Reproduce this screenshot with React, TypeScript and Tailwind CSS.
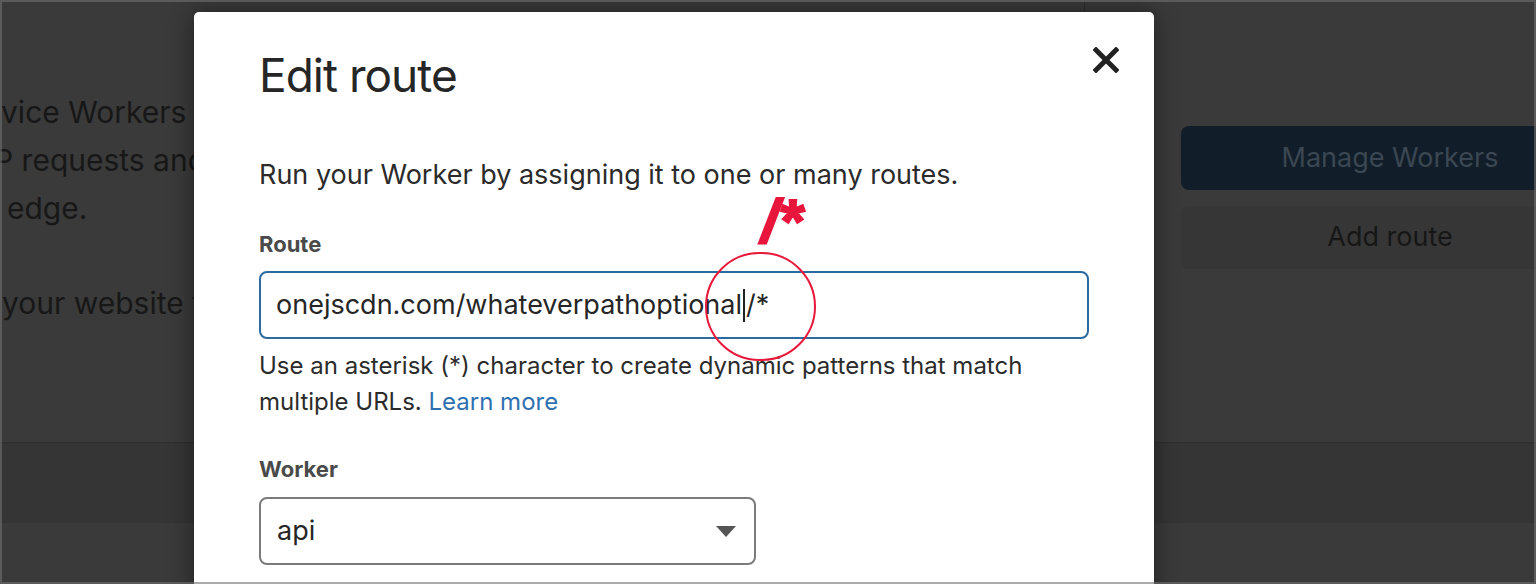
import React from "react";

const bgLines = [
  { text: "vice Workers intercept", ml: "ml-[1px]" },
  { text: "P requests and run", ml: "-ml-[6px]" },
  { text: "edge.", ml: "ml-[7px]" },
];

function CloseIcon() {
  return (
    <svg width="26" height="26" viewBox="0 0 26 26">
      <path d="M3 3 L23 23 M23 3 L3 23" stroke="#222" strokeWidth="5" strokeLinecap="square" />
    </svg>
  );
}

export default function App() {
  return (
    <div
      className="relative w-[1536px] h-[584px] overflow-hidden bg-[#3a3a3a]"
      style={{ fontFamily: "Inter, 'Noto Sans', sans-serif" }}
    >
      {/* page behind the dialog */}
      <div className="flex h-[442px]">
        <div className="w-[1085px] shrink-0 border-r border-[#2f2f2f] pt-[88px] text-[30px] leading-[48px] text-[#171717] whitespace-nowrap overflow-hidden">
          {bgLines.map(l => (
            <div key={l.text} className={l.ml}>{l.text}</div>
          ))}
          <div className="mt-[47px] ml-[2px]">your website to run</div>
        </div>
        <div className="flex-1 pl-[96px] pt-[126px] flex flex-col gap-[16px]">
          <div className="w-[418px] shrink-0 h-[64px] rounded-[8px] bg-[#111e29] flex items-center justify-center text-[27px] text-[#3b4752]">
            Manage Workers
          </div>
          <div className="w-[418px] shrink-0 h-[63px] rounded-[8px] bg-[#363636] flex items-center justify-center text-[27px] text-[#161616]">
            Add route
          </div>
        </div>
      </div>
      <div className="h-[81px] border-t border-[#2f2f2f] bg-[#353535]" />

      {/* dialog */}
      <div className="absolute left-[194px] top-[12px] w-[960px] h-[620px] bg-white rounded-[5px] shadow-[0_0_24px_rgba(0,0,0,0.45)] pl-[65px] pr-[65px] text-[#262626]">
        <div className="flex items-start justify-between pt-[36px]">
          <h1 className="text-[46px] leading-[54px] tracking-[-1px] text-[#262626]">Edit route</h1>
          <div className="mt-[-1px] mr-[-30px]">
            <CloseIcon />
          </div>
        </div>
        <p className="mt-[56px] text-[27px] leading-[34px] text-[#2b2b2b]">
          Run your Worker by assigning it to one or many routes.
        </p>
        <div className="mt-[38px] text-[22px] font-bold leading-[28px] text-[#4a4a4a]">Route</div>
        <div className="mt-[13px] w-[830px] h-[68px] rounded-[8px] border-2 border-[#2c6aa0] flex items-center pl-[15px] text-[27px] text-[#262626]">
          <span>onejscdn.com/whateverpathoptional</span>
          <span className="inline-block w-[2px] h-[33px] bg-[#222] mx-[1px]" />
          <span>/*</span>
        </div>
        <p className="mt-[9px] text-[24px] leading-[36px] text-[#2b2b2b]">
          Use an asterisk (*) character to create dynamic patterns that match
          <br />
          multiple URLs. <span className="text-[#2f70b0]">Learn more</span>
        </p>
        <div className="mt-[35px] text-[22px] font-bold leading-[28px] text-[#4a4a4a]">Worker</div>
        <div className="mt-[14px] w-[497px] h-[68px] rounded-[8px] border-2 border-[#7b7b7b] flex items-center justify-between pl-[16px] pr-[18px] text-[27px] text-[#262626]">
          <span>api</span>
          <svg width="20" height="11" viewBox="0 0 20 11">
            <path d="M0 0 L20 0 L10 11 Z" fill="#555" />
          </svg>
        </div>
      </div>

      {/* annotation */}
      <div className="absolute left-[705px] top-[252px] w-[111px] h-[109px] rounded-full border-2 border-[#e8183a]" />
      <div
        className="absolute left-[761px] top-[186px] text-[62px] leading-[70px] font-bold italic text-[#e8163c]"
        style={{
          fontFamily: "'Liberation Sans', Arial, sans-serif",
          WebkitTextStroke: "2px #e8163c",
          textShadow: "0 0 4px #fff, 0 0 4px #fff, 0 1px 3px rgba(0,0,0,0.2)",
        }}
      >
        /*
      </div>

      {/* screenshot frame */}
      <div className="absolute inset-0 border-2 border-[rgba(114,114,114,0.6)] pointer-events-none" />
    </div>
  );
}
